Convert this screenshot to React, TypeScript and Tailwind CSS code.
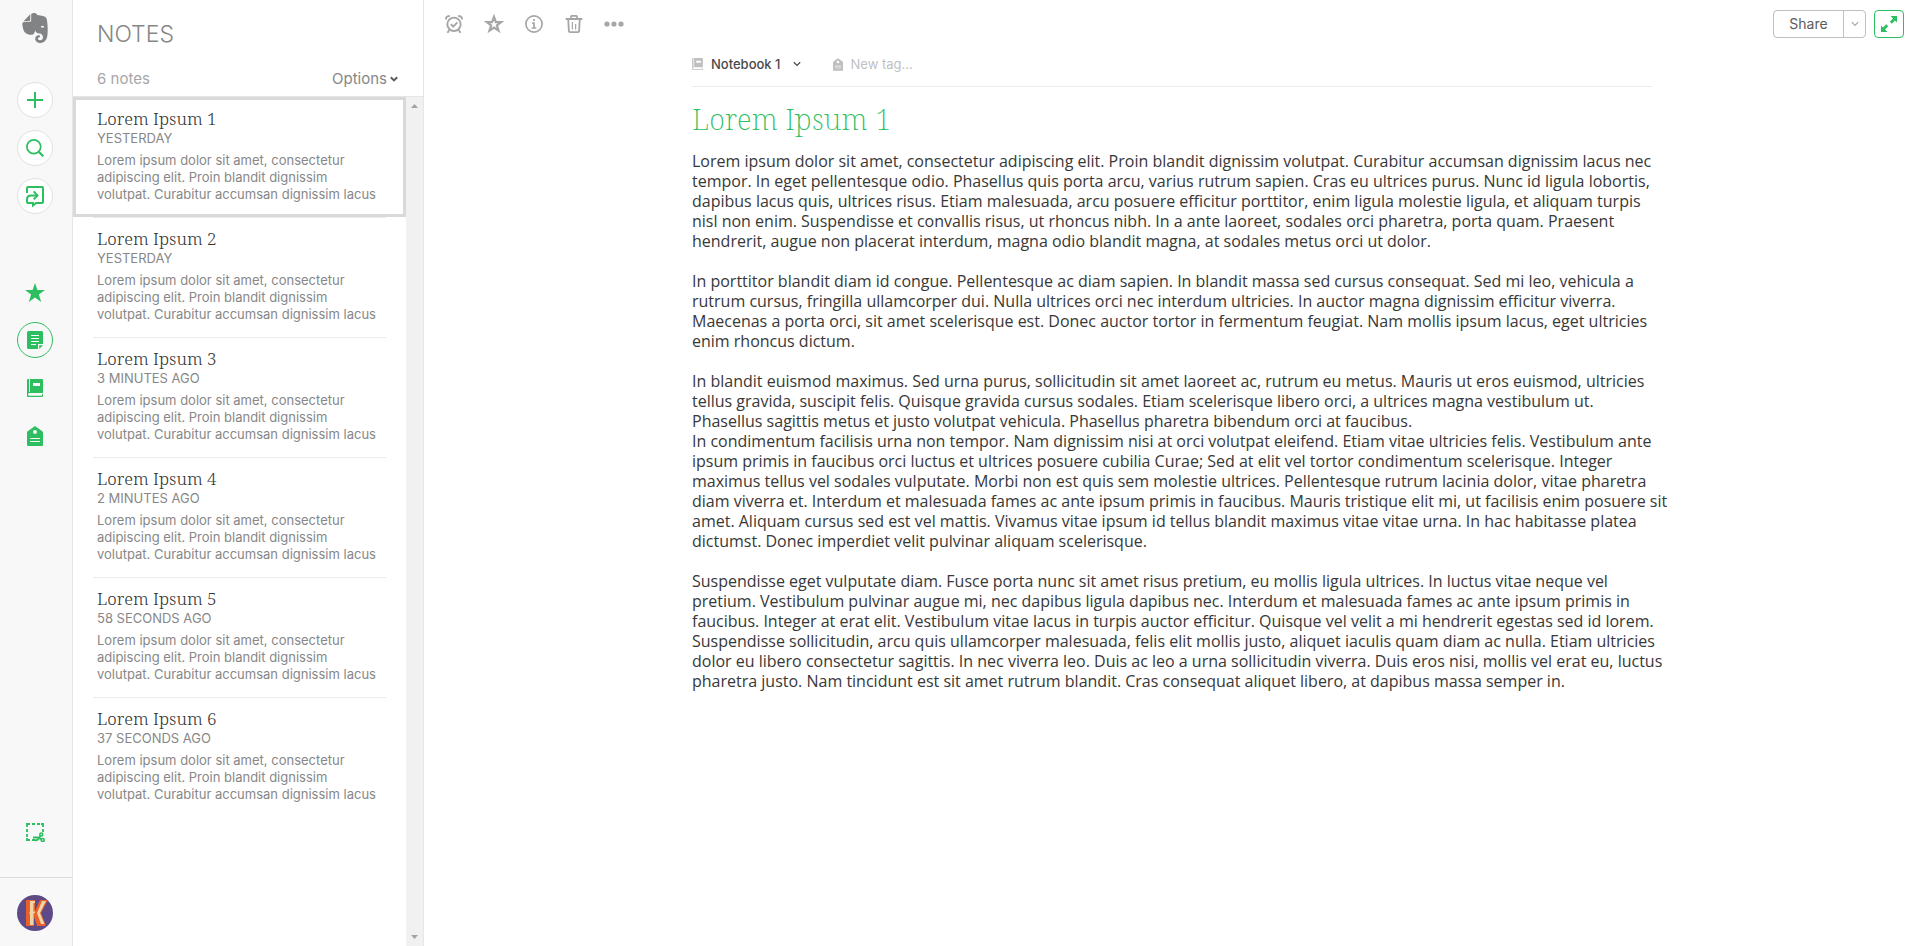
import React from "react";
import { SiEvernote } from "react-icons/si";

const notes = [
  { title: "Lorem Ipsum 1", when: "YESTERDAY" },
  { title: "Lorem Ipsum 2", when: "YESTERDAY" },
  { title: "Lorem Ipsum 3", when: "3 MINUTES AGO" },
  { title: "Lorem Ipsum 4", when: "2 MINUTES AGO" },
  { title: "Lorem Ipsum 5", when: "58 SECONDS AGO" },
  { title: "Lorem Ipsum 6", when: "37 SECONDS AGO" },
];

const snippet = `Lorem ipsum dolor sit amet, consectetur
adipiscing elit. Proin blandit dignissim
volutpat. Curabitur accumsan dignissim lacus`;

const paragraphs = [
  `Lorem ipsum dolor sit amet, consectetur adipiscing elit. Proin blandit dignissim volutpat. Curabitur accumsan dignissim lacus nec
tempor. In eget pellentesque odio. Phasellus quis porta arcu, varius rutrum sapien. Cras eu ultrices purus. Nunc id ligula lobortis,
dapibus lacus quis, ultrices risus. Etiam malesuada, arcu posuere efficitur porttitor, enim ligula molestie ligula, et aliquam turpis
nisl non enim. Suspendisse et convallis risus, ut rhoncus nibh. In a ante laoreet, sodales orci pharetra, porta quam. Praesent
hendrerit, augue non placerat interdum, magna odio blandit magna, at sodales metus orci ut dolor.`,
  `In porttitor blandit diam id congue. Pellentesque ac diam sapien. In blandit massa sed cursus consequat. Sed mi leo, vehicula a
rutrum cursus, fringilla ullamcorper dui. Nulla ultrices orci nec interdum ultricies. In auctor magna dignissim efficitur viverra.
Maecenas a porta orci, sit amet scelerisque est. Donec auctor tortor in fermentum feugiat. Nam mollis ipsum lacus, eget ultricies
enim rhoncus dictum.`,
  `In blandit euismod maximus. Sed urna purus, sollicitudin sit amet laoreet ac, rutrum eu metus. Mauris ut eros euismod, ultricies
tellus gravida, suscipit felis. Quisque gravida cursus sodales. Etiam scelerisque libero orci, a ultrices magna vestibulum ut.
Phasellus sagittis metus et justo volutpat vehicula. Phasellus pharetra bibendum orci at faucibus.
In condimentum facilisis urna non tempor. Nam dignissim nisi at orci volutpat eleifend. Etiam vitae ultricies felis. Vestibulum ante
ipsum primis in faucibus orci luctus et ultrices posuere cubilia Curae; Sed at elit vel tortor condimentum scelerisque. Integer
maximus tellus vel sodales vulputate. Morbi non est quis sem molestie ultrices. Pellentesque rutrum lacinia dolor, vitae pharetra
diam viverra et. Interdum et malesuada fames ac ante ipsum primis in faucibus. Mauris tristique elit mi, ut facilisis enim posuere sit
amet. Aliquam cursus sed est vel mattis. Vivamus vitae ipsum id tellus blandit maximus vitae vitae urna. In hac habitasse platea
dictumst. Donec imperdiet velit pulvinar aliquam scelerisque.`,
  `Suspendisse eget vulputate diam. Fusce porta nunc sit amet risus pretium, eu mollis ligula ultrices. In luctus vitae neque vel
pretium. Vestibulum pulvinar augue mi, nec dapibus ligula dapibus nec. Interdum et malesuada fames ac ante ipsum primis in
faucibus. Integer at erat elit. Vestibulum vitae lacus in turpis auctor efficitur. Quisque vel velit a mi hendrerit egestas sed id lorem.
Suspendisse sollicitudin, arcu quis ullamcorper malesuada, felis elit mollis justo, aliquet iaculis quam diam ac nulla. Etiam ultricies
dolor eu libero consectetur sagittis. In nec viverra leo. Duis ac leo a urna sollicitudin viverra. Duis eros nisi, mollis vel erat eu, luctus
pharetra justo. Nam tincidunt est sit amet rutrum blandit. Cras consequat aliquet libero, at dapibus massa semper in.`,
];

function NotebookIcon({ className }: { className: string }) {
  return (
    <svg viewBox="0 0 16 18" className={className} fill="currentColor" aria-hidden="true">
      <path fillRule="evenodd" d="M0 1a1 1 0 0 1 1-1h1v13h1V0h12a1 1 0 0 1 1 1v13H2.500a1 1 0 0 0 0 2.800H15V15h1v2a1 1 0 0 1-1 1H1a1 1 0 0 1-1-1zM6 4v3h7V4z" />
    </svg>
  );
}

function TagIcon({ className }: { className: string }) {
  return (
    <svg viewBox="0 0 16 20" className={className} fill="currentColor" aria-hidden="true">
      <path fillRule="evenodd" d="M8 0l7.300 5.200q.7.600.7 1.400V19a1 1 0 0 1-1 1H1a1 1 0 0 1-1-1V6.600q0-.8.700-1.400zM8 4a2 2 0 1 0 0 4 2 2 0 0 0 0-4zM3 12v1h10v-1zM3 15v1h10v-1z" />
    </svg>
  );
}

function Chevron({ className, width = 1.5 }: { className: string; width?: number }) {
  return (
    <svg viewBox="0 0 8 6" className={className} fill="none" stroke="currentColor" strokeWidth={width} aria-hidden="true">
      <path d="M.8 1.200 4 4.400l3.200-3.200" />
    </svg>
  );
}

const roundButton = "flex size-9 shrink-0 items-center justify-center rounded-full border border-[#e1e1e1] bg-white";
const plainButton = "flex size-9 shrink-0 items-center justify-center rounded-full";
const toolButton = "flex h-10 w-10 items-center justify-center";

function Sidebar() {
  return (
    <aside className="flex w-[73px] shrink-0 flex-col items-center border-r border-[#e6e6e6] bg-[#f8f8f8] pr-0.5 text-[#2dbe60]">
      <a href="#home" aria-label="Home" className="mt-[13px] text-[#818385]">
        <SiEvernote className="size-[30px]" />
      </a>
      <nav aria-label="Actions" className="mt-[39px] flex flex-col gap-3">
        <button aria-label="New note" className={roundButton}>
          <svg viewBox="0 0 16 16" className="size-4" stroke="currentColor" strokeWidth="2"><path d="M8 0v16M0 8h16" /></svg>
        </button>
        <button aria-label="Search" className={roundButton}>
          <svg viewBox="0 0 18 18" className="size-[18px]" fill="none" stroke="currentColor">
            <circle cx="7.800" cy="7.800" r="6.900" strokeWidth="1.700" />
            <path d="M12.700 12.700l4.600 4.600" strokeWidth="2.200" />
          </svg>
        </button>
        <button aria-label="Work chat" className={roundButton}>
          <svg viewBox="0 0 18 22" className="mt-0.5 h-[22px] w-[18px]" fill="none" stroke="currentColor" strokeWidth="2">
            <path d="M1 7V2a1 1 0 0 1 1-1h14a1 1 0 0 1 1 1v14a1 1 0 0 1-1 1h-5.800L7 19.500V17H2a1 1 0 0 1-1-1v-2.500c0-3 1.500-4.100 4-4.100h6" />
            <path d="M7.700 5.400l3.800 4-3.800 4" />
          </svg>
        </button>
      </nav>
      <nav aria-label="Library" className="mt-[60px] flex flex-col gap-3">
        <button aria-label="Shortcuts" className={plainButton}>
          <svg viewBox="0 0 20 19" className="h-[19px] w-5" fill="currentColor"><path d="M10 0l2.400 7.100H20l-6.100 4.500L16.200 19 10 14.500 3.800 19l2.300-7.400L0 7.100h7.600z" /></svg>
        </button>
        <button aria-label="Notes" className="flex size-9 shrink-0 items-center justify-center rounded-full border border-[#2dbe60]">
          <svg viewBox="0 0 16 18" className="h-[18px] w-4">
            <path d="M1.500 0h13A1.500 1.500 0 0 1 16 1.500V13h-5v5H1.500A1.500 1.500 0 0 1 0 16.500v-15A1.500 1.500 0 0 1 1.500 0zM12.200 14.200H16L12.200 18z" fill="currentColor" />
            <path d="M4 4.500h8M4 7.500h8M4 10.500h8M4 13.500h5" stroke="#fff" strokeWidth="1" />
          </svg>
        </button>
        <button aria-label="Notebooks" className={plainButton}><NotebookIcon className="h-[18px] w-4" /></button>
        <button aria-label="Tags" className={plainButton}><TagIcon className="h-5 w-4" /></button>
      </nav>
      <button aria-label="Clip" className="mb-[27px] mt-auto flex size-9 items-center justify-center">
        <svg viewBox="0 0 20 20" className="size-5" fill="none" stroke="currentColor">
          <path d="M2 5V2h3M7 2h3M12 2h3M16 2h2v3M18 7v3M2 7v3M2 12v3M2 16v2h3M7 18h3" strokeWidth="1.800" />
          <circle cx="16.300" cy="12.500" r="1.500" strokeWidth="1.600" />
          <circle cx="17.700" cy="18" r="1.500" strokeWidth="1.600" />
          <path d="M15.600 13.800l-2.800 4-3 .700M16.200 17.200l-3-1.700H8" strokeWidth="1.800" />
        </svg>
      </button>
      <div className="-mr-0.5 flex justify-center self-stretch border-t border-[#dcdcdc] pb-[15px] pr-0.5 pt-[17px]">
        <button aria-label="Account" className="size-9">
          <svg viewBox="0 0 36 36" className="size-9">
            <circle cx="18" cy="18" r="18" fill="#5b4a8c" />
            <path d="M5 7q2.200-2 4.400 0M2 13q3-2 6 0M1 19q3-2 7 0M2 25q3-2 6 0M29 10q2-2 4 0M27 16q3.500-2 8 0M28 22q3-2 7 0M28 28q2-2 4 0M10 3q4-2 8 0t8 0M12 33q4-2 10 0" stroke="#70486f" fill="none" />
            <path d="M9 5h9v11l5-11h8l-7 13 5 13h-9l-3-9v9H9z" fill="#e8602a" />
            <path d="M13 6h5v2h-1.500v9L18 16v2l-1.500.5V30H13V19l-1-1 1-1zM25 6h4l-6 12 4.500 11H24l-4-11z" fill="#f0d5a4" />
          </svg>
        </button>
      </div>
    </aside>
  );
}

function NoteList() {
  return (
    <section className="flex w-[351px] shrink-0 flex-col border-r border-[#e6e6e6]">
      <header className="flex h-[97px] shrink-0 flex-col border-b border-[#e6e6e6] pl-6 pr-[25px] text-[#878787]">
        <h1 className="mt-[18px] text-[23px] font-light leading-8">NOTES</h1>
        <div className="mt-5 flex items-center justify-between text-[15px] leading-[18px]">
          <span className="text-[#a6a6a6]">6 notes</span>
          <button className="flex items-center gap-[3px]">
            Options
            <Chevron className="h-1.5 w-2 text-[#5c5c5c]" width={2} />
          </button>
        </div>
      </header>
      <div className="flex min-h-0 flex-1">
        <ul className="min-w-0 flex-1">
          {notes.map((note, i) => (
            <li key={note.title} className={i === 0 ? "h-[120px] border-[3px] border-[#d9d9d9]" : "h-[120px] px-5"}>
              <a
                href="#note"
                className={
                  i === 0
                    ? "block px-[21px] pt-2"
                    : "block h-full border-t border-[#ececec] px-1 pt-2.5"
                }
              >
                <h2 className="font-['Noto_Serif','DejaVu_Serif_Condensed',serif] text-[17px] font-light leading-[22px] text-[#333333]">{note.title}</h2>
                <p className="text-[13px] leading-4 text-[#878787]">{note.when}</p>
                <p className="mt-[6px] whitespace-pre text-[13px] leading-[17px] text-[#878787]">{snippet}</p>
              </a>
            </li>
          ))}
        </ul>
        <div className="flex w-[17px] flex-col items-center justify-between bg-[#f1f1f1] py-[7px]" aria-hidden="true">
          <svg viewBox="0 0 7 4" className="h-1 w-[7px] fill-[#a3a3a3]"><path d="M0 4l3.500-4L7 4z" /></svg>
          <svg viewBox="0 0 7 4" className="h-1 w-[7px] fill-[#a3a3a3]"><path d="M0 0l3.500 4L7 0z" /></svg>
        </div>
      </div>
    </section>
  );
}

function Toolbar() {
  return (
    <header className="flex h-12 shrink-0 items-center justify-between pl-2.5 pr-4">
      <div className="flex text-[#a6a6a6]">
        <button aria-label="Reminder" className={toolButton}>
          <svg viewBox="0 0 18 18" className="size-[18px]" fill="none" stroke="currentColor" strokeWidth="1.900">
            <circle cx="9" cy="9.300" r="6.700" />
            <path d="M5.800 9.200l2.400 2.400 4.200-4.200" />
            <path d="M.9 4.600C.9 2 2.200 1 4.800 1M17.100 4.600c0-2.600-1.300-3.600-3.900-3.600M4.200 15l-1.700 2.900M13.800 15l1.700 2.900" />
          </svg>
        </button>
        <button aria-label="Add shortcut" className={toolButton}>
          <svg viewBox="0 0 20 20" className="size-5" fill="none" stroke="currentColor" strokeWidth="2.200"><path d="M10 2.800l1.900 5.300h5.200l-4.200 3.200 1.600 5.300L10 13.500l-4.500 3.100 1.600-5.300-4.200-3.200h5.200z" /></svg>
        </button>
        <button aria-label="Note info" className={toolButton}>
          <svg viewBox="0 0 18 18" className="size-[18px]" fill="none" stroke="currentColor" strokeWidth="1.700">
            <circle cx="9" cy="9" r="8.100" />
            <path d="M9 4v2M7 8h2v5M6.700 13h4.600" strokeWidth="1.700" />
          </svg>
        </button>
        <button aria-label="Delete note" className={toolButton}>
          <svg viewBox="0 0 18 18" className="size-[18px]" fill="none" stroke="currentColor" strokeWidth="1.800">
            <path d="M.7 4h16.600M6 4V1.600Q6 .9 6.700.9h4.600q.7 0 .7.700V4M3.200 4l.7 12.200q.1.900 1 .9h8.200q.9 0 1-.9L14.800 4" />
            <path d="M7.400 7v7.500M10.600 9v5.500" strokeWidth="1.200" />
          </svg>
        </button>
        <button aria-label="More" className={toolButton}>
          <svg viewBox="0 0 20 6" className="h-1.5 w-5" fill="currentColor"><circle cx="3" cy="3" r="2.600" /><circle cx="10" cy="3" r="2.600" /><circle cx="17" cy="3" r="2.600" /></svg>
        </button>
      </div>
      <div className="flex h-7 gap-2">
        <div className="flex rounded border border-[#bfbfbf] text-[#5c5c5c]">
          <button className="w-[69px] text-sm">Share</button>
          <button aria-label="Share options" className="flex w-[22px] items-center justify-center border-l border-[#bfbfbf] text-[#a6a6a6]">
            <Chevron className="h-1.5 w-2" width={1.2} />
          </button>
        </div>
        <button aria-label="Expand" className="flex w-[30px] items-center justify-center rounded border border-[#2dbe60] text-[#2dbe60]">
          <svg viewBox="0 0 16 16" className="size-4" fill="currentColor">
            <path d="M9.500 0H16v6.500l-2-2-3.200 3.200-2-2L12 2.500zM6.500 16H0V9.500l2 2 3.200-3.200 2 2L4 13.500z" />
          </svg>
        </button>
      </div>
    </header>
  );
}

export default function App() {
  return (
    <div className="flex min-h-screen bg-white font-['Inter','Liberation_Sans',sans-serif]">
      <Sidebar />
      <NoteList />
      <main className="flex min-w-0 flex-1 flex-col">
        <Toolbar />
        <article className="mx-auto w-full max-w-[960px]">
          <div className="flex h-[39px] items-start border-b border-[#ececec] pt-1.5 text-[13px] leading-5">
            <button className="flex items-center text-[#4a4a4a]">
              <NotebookIcon className="mr-2 h-3 w-[11px] text-[#bfbfbf]" />
              <span className="font-medium">Notebook 1</span>
              <Chevron className="ml-3 h-1.5 w-2" width={1.3} />
            </button>
            <label className="ml-8 flex items-center">
              <TagIcon className="mr-2 h-[13px] w-2.5 text-[#bfbfbf]" />
              <input aria-label="New tag" placeholder="New tag..." className="w-24 leading-5 outline-none placeholder:text-[#bfbfbf]" />
            </label>
          </div>
          <h2 className="mt-3 font-['Noto_Serif','DejaVu_Serif_Condensed',serif] text-[29px] font-extralight leading-10 text-[#2dbe60]">Lorem Ipsum 1</h2>
          <div className="mt-3 flex flex-col gap-5 whitespace-pre font-['Open_Sans','Noto_Sans',sans-serif] text-[16px] leading-5 text-[#383838]">
            {paragraphs.map((text) => (
              <p key={text}>{text}</p>
            ))}
          </div>
        </article>
      </main>
    </div>
  );
}
